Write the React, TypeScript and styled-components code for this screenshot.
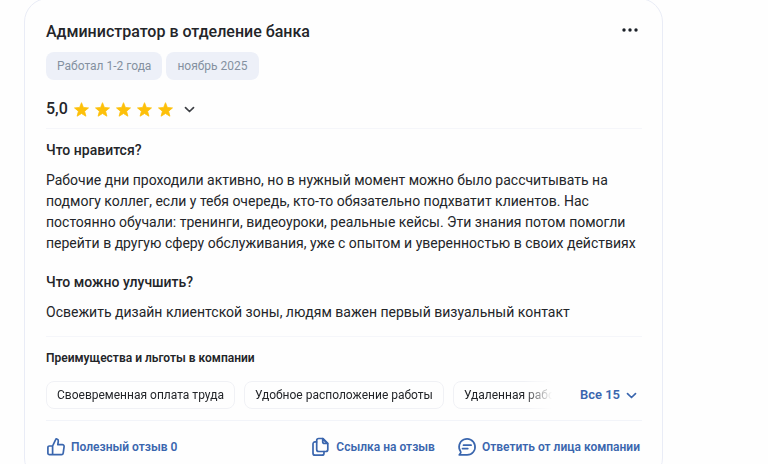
import React from "react";
import styled, { createGlobalStyle } from "styled-components";

const GlobalStyle = createGlobalStyle`
  * { box-sizing: border-box; }
  body {
    margin: 0;
    background: #fefefe;
    color: #232529;
    font-family: Roboto, "Liberation Sans", sans-serif;
    overflow: hidden;
  }
  h2, h3, p, ul { margin: 0; padding: 0; }
  ul { list-style: none; }
  button { font-family: inherit; color: inherit; background: none; border: 0; padding: 0; cursor: pointer; }
  svg { display: block; flex: none; }
`;

const Page = styled.main`
  padding: 0 105px 0 24px;
`;

const Card = styled.article`
  margin-top: -2px;
  padding: 23px 20px 24px 21px;
  border: 1px solid #e9ecf6;
  border-radius: 24px;
`;

const Header = styled.header`
  display: flex;
  justify-content: space-between;
  align-items: center;
`;

const Title = styled.h2`
  font-size: 16px;
  line-height: 20px;
  font-weight: 500;
`;

const MenuButton = styled.button`
  padding: 2px 4px 6px;
`;

const Tags = styled.ul`
  display: flex;
  gap: 4px;
  margin-top: 10px;
`;

const Tag = styled.li`
  padding: 1px 11px 0;
  border-radius: 8px;
  background: #edf0f8;
  color: #8490a0;
  font-size: 12px;
  line-height: 27px;
`;

const Rating = styled.button`
  display: flex;
  align-items: center;
  margin-top: 19px;
  color: #3c3f44;
`;

const Score = styled.span`
  color: #232529;
  font-size: 16px;
  line-height: 20px;
  font-weight: 500;
  margin-right: 6px;
`;

const Stars = styled.span`
  display: flex;
  gap: 6px;
  margin-right: 11px;
`;

const Section = styled.section<{ $divided?: boolean }>`
  padding-top: ${(p) => (p.$divided ? "11px" : "18px")};
  border-top: ${(p) => (p.$divided ? "1px solid #f5f6fa" : "0")};
`;

const Sections = styled.div`
  padding-top: 9px;

  & > section + section:last-child { margin-top: 13px; }
`;

const Heading = styled.h3<{ $small?: boolean }>`
  font-size: ${(p) => (p.$small ? "12px" : "14px")};
  line-height: 21px;
  font-weight: ${(p) => (p.$small ? 600 : 500)};
`;

const Text = styled.p`
  margin-top: 9px;
  font-size: 14px;
  line-height: 21px;
`;

const Benefits = styled.div`
  display: flex;
  align-items: center;
  margin-top: 12px;
`;

const Chips = styled.ul`
  display: flex;
  flex: 1;
  min-width: 0;
  gap: 9px;
  overflow: hidden;
  mask-image: linear-gradient(to right, #000 calc(100% - 32px), transparent calc(100% - 4px));
`;

const Chip = styled.li`
  flex: none;
  padding: 0 10px;
  border: 1px solid #f0f1f5;
  border-radius: 8px;
  font-size: 12px;
  line-height: 26px;
`;

const LinkButton = styled.button`
  display: flex;
  align-items: center;
  gap: 5px;
  color: #3a66ae;
  font-size: 12px;
  line-height: 20px;
  font-weight: 600;
  white-space: nowrap;
`;

const ShowAll = styled(LinkButton)`
  gap: 6px;
  margin: 0 5px 0 24px;
  font-size: 13px;
`;

const Footer = styled.footer`
  display: flex;
  gap: 22px;
  margin-top: 11px;
  padding: 16px 2px 0 0;
  border-top: 1px solid #f2f4f9;

  & > :first-child { margin-right: auto; }
`;

const Star = () => (
  <svg width="15" height="15" viewBox="0 0 15 15" aria-hidden="true">
    <path
      fill="#fdc00a"
      stroke="#fdc00a"
      strokeWidth="0.8"
      strokeLinejoin="round"
      d="M7.5.7l1.900 4.800 5.100.4-3.900 3.300 1.300 5-4.400-2.700-4.400 2.700 1.300-5L.5 5.900l5.100-.4z"
    />
  </svg>
);

const Chevron = () => (
  <svg width="11" height="11" viewBox="0 0 11 11" fill="none" stroke="currentColor" strokeWidth="1.7" strokeLinecap="round" strokeLinejoin="round" aria-hidden="true">
    <path d="M1.500 3.700l4 3.800 4-3.800" />
  </svg>
);

const iconProps = {
  width: 20,
  height: 20,
  viewBox: "0 0 20 20",
  fill: "none",
  stroke: "currentColor",
  strokeWidth: 1.7,
  strokeLinejoin: "round" as const,
  strokeLinecap: "round" as const,
  "aria-hidden": true,
};

const ThumbIcon = () => (
  <svg {...iconProps}>
    <path d="M6.600 17.700H3.400a1.500 1.500 0 0 1-1.500-1.500v-5.700A1.500 1.500 0 0 1 3.400 9h3.200zM6.600 9l2.900-6.200c.3-.7.900-1 1.500-.8 1 .3 1.400 1.200 1.300 2.100L11.800 7.700h4.600c1 0 1.900.9 1.700 1.900l-.9 6.500c-.1.900-.9 1.600-1.800 1.600H6.600z" />
  </svg>
);

const CopyIcon = () => (
  <svg {...iconProps}>
    <path d="M5.700 3.500a2 2 0 0 1 2-2h4.300l4.800 4.800v6.200a2 2 0 0 1-2 2H7.700a2 2 0 0 1-2-2z" />
    <path d="M11.700 1.700v3.200a1.600 1.600 0 0 0 1.600 1.600h3.200z" fill="currentColor" fillOpacity="0.3" />
    <path d="M5.500 4.900H4a2 2 0 0 0-2 2v9.300a2 2 0 0 0 2 2h7a2 2 0 0 0 2-2v-1.500" />
  </svg>
);

const ChatIcon = () => (
  <svg {...iconProps}>
    <path d="M2.200 17.900h7.900A8 8 0 1 0 3.600 14.600c.3.400.3.900 0 1.300zM6.500 8.200h7.600M5.500 11.600h5.300" />
  </svg>
);

const benefits = ["Своевременная оплата труда", "Удобное расположение работы", "Удаленная работа"];

export default function App() {
  return (
    <>
      <GlobalStyle />
      <Page>
        <Card>
          <Header>
            <Title>Администратор в отделение банка</Title>
            <MenuButton aria-label="Меню">
              <svg width="16" height="4" viewBox="0 0 16 4" fill="#1b2028" aria-hidden="true">
                <circle cx="2" cy="2" r="1.700" />
                <circle cx="8" cy="2" r="1.700" />
                <circle cx="14" cy="2" r="1.700" />
              </svg>
            </MenuButton>
          </Header>
          <Tags>
            <Tag>Работал 1-2 года</Tag>
            <Tag>ноябрь 2025</Tag>
          </Tags>
          <Rating>
            <Score>5,0</Score>
            <Stars>
              {[1, 2, 3, 4, 5].map((n) => (
                <Star key={n} />
              ))}
            </Stars>
            <Chevron />
          </Rating>
          <Sections>
            <Section $divided>
              <Heading>Что нравится?</Heading>
              <Text>
                Рабочие дни проходили активно, но в нужный момент можно было рассчитывать на подмогу коллег, если у тебя
                очередь, кто-то обязательно подхватит клиентов. Нас постоянно обучали: тренинги, видеоуроки, реальные
                кейсы. Эти знания потом помогли перейти в другую сферу обслуживания, уже с опытом и уверенностью в своих
                действиях
              </Text>
            </Section>
            <Section>
              <Heading>Что можно улучшить?</Heading>
              <Text>Освежить дизайн клиентской зоны, людям важен первый визуальный контакт</Text>
            </Section>
            <Section $divided>
              <Heading $small>Преимущества и льготы в компании</Heading>
              <Benefits>
                <Chips>
                  {benefits.map((b) => (
                    <Chip key={b}>{b}</Chip>
                  ))}
                </Chips>
                <ShowAll>
                  Все 15
                  <Chevron />
                </ShowAll>
              </Benefits>
            </Section>
          </Sections>
          <Footer>
            <LinkButton>
              <ThumbIcon />
              Полезный отзыв 0
            </LinkButton>
            <LinkButton>
              <CopyIcon />
              Ссылка на отзыв
            </LinkButton>
            <LinkButton>
              <ChatIcon />
              Ответить от лица компании
            </LinkButton>
          </Footer>
        </Card>
      </Page>
    </>
  );
}
